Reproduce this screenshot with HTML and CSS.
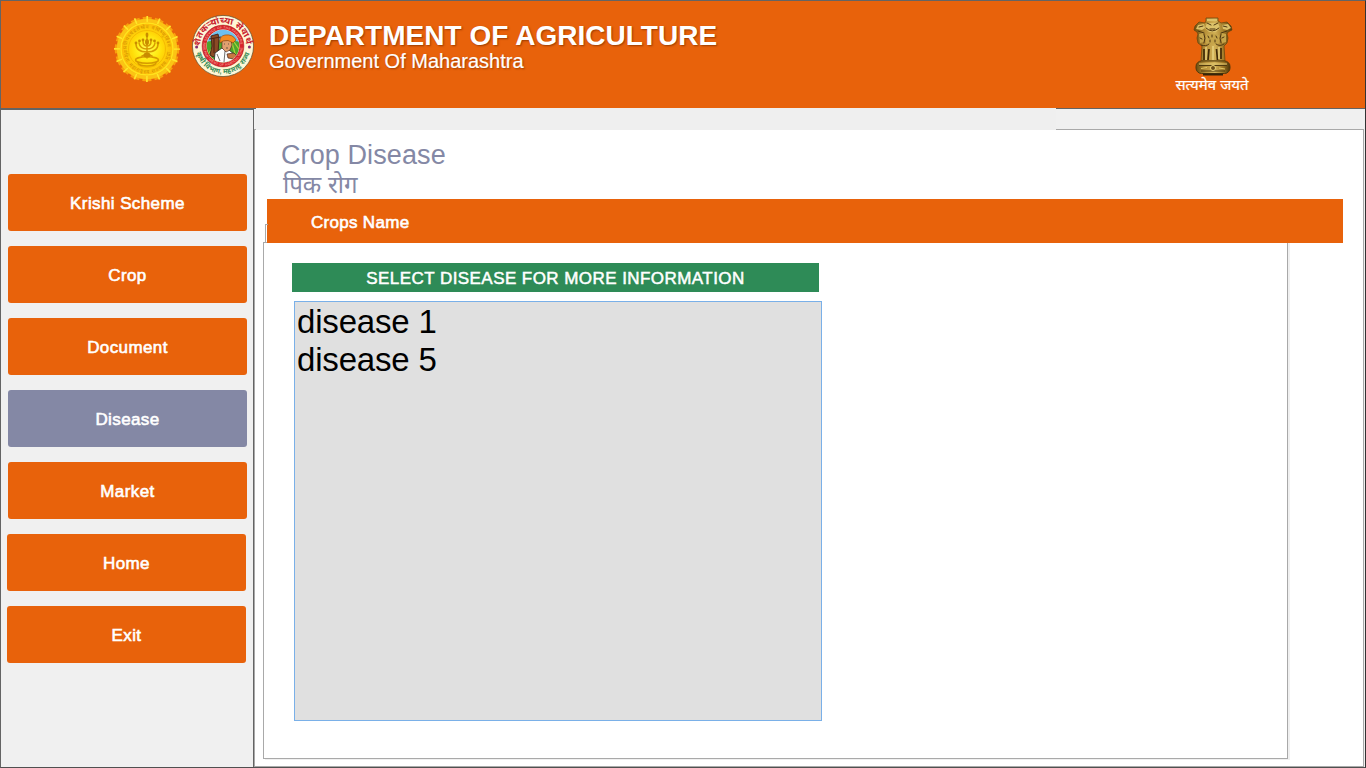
FILE: index.html
```html
<!DOCTYPE html>
<html lang="en">
<head>
<meta charset="utf-8">
<title>Department of Agriculture</title>
<link rel="stylesheet" href="styles.css">
</head>
<body>
<div class="window">
  <header class="header">
    <svg class="sun-logo" width="68" height="68" viewBox="-34 -34 68 68">
      <defs>
        <radialGradient id="sun"><stop offset="0" stop-color="#fff65a"/><stop offset=".35" stop-color="#fff01c"/><stop offset=".6" stop-color="#ffdb08"/><stop offset="1" stop-color="#fcb90a"/></radialGradient>
        <path id="sunTop" d="M-20.5 0A20.5 20.5 0 0 1 20.5 0"/>
        <path id="sunBottom" d="M-23.5 1A23.5 23.5 0 0 0 23.5 1"/>
      </defs>
      <circle r="29.500" fill="#f9a00d"/>
      <circle r="29.500" fill="none" stroke="#f9a00d" stroke-width="5.500" stroke-dasharray="8.6 2.985" stroke-dashoffset="4.3"/>
      <circle r="28.500" fill="none" stroke="#fbc414" stroke-width="3.500"/>
      <circle r="30" fill="none" stroke="#ffe72a" stroke-width="6" stroke-dasharray="1.6 10.181" stroke-dashoffset=".8"/>
      <circle r="26" fill="url(#sun)" stroke="#ffe21c" stroke-width="1.6"/>
      <circle r="18.5" fill="none" stroke="#f3b300" stroke-width=".8"/>
      <text class="seal-text" fill="#d08c00" font-size="5"><textPath href="#sunTop" textLength="62">प्रतिपच्चंद्रलेखेव वर्धिष्णुर्विश्व</textPath></text>
      <text class="seal-text" fill="#d08c00" font-size="5"><textPath href="#sunBottom" textLength="71">वंदिता महाराष्ट्रस्य राज्यस्य मुद्रा</textPath></text>
      <g fill="none" stroke="#d79a00" stroke-width="1.5" stroke-linecap="round">
        <path d="M0-14V9M-11-5Q-11 3 0 3T11-5M-8-6Q-7 0 0 0T8-6M-4-8Q-4-3 0-3T4-8"/>
        <path d="M-5 7Q0 4 5 7"/>
        <ellipse cy="11" rx="11.5" ry="3.2"/><path d="M-9 14Q-8 17 0 17T9 14"/>
      </g>
      <g fill="#c98c00"><ellipse cy="-14" rx="1.4" ry="2.4"/><circle cx="-4" cy="-9" r="1.4"/><circle cx="4" cy="-9" r="1.4"/><circle cx="-7.5" cy="-8" r="1.4"/><circle cx="7.5" cy="-8" r="1.4"/><circle cx="-11" cy="-6" r="1.4"/><circle cx="11" cy="-6" r="1.4"/><ellipse cy="-7" rx="2" ry="3"/><ellipse cy="6" rx="3.5" ry="2.6"/></g>
    </svg>
    <svg class="farmer-logo" width="64" height="64" viewBox="-32 -32 64 64">
      <defs>
        <clipPath id="scene"><circle r="16.2"/></clipPath>
        <path id="sealTop" d="M-22.7 4A23 23 0 1 1 22.7 4"/>
        <path id="sealBottom" d="M-27 5A27.4 27.4 0 0 0 27 5"/>
        <path id="ringTop" d="M-17.5 0A17.5 17.5 0 0 1 17.5 0"/>
        <path id="ringBottom" d="M-19.8 0A19.8 19.8 0 0 0 19.8 0"/>
      </defs>
      <circle r="30.6" fill="#fff6d5" stroke="#564c2c" stroke-width=".7"/>
      <circle r="18.7" fill="none" stroke="#d7242c" stroke-width="4.4"/>
      <circle r="20.9" fill="none" stroke="#a61b21" stroke-width=".5"/>
      <g clip-path="url(#scene)">
        <path fill="#6fc0ee" d="M-18-18h36v16h-36z"/><path fill="#4ea52b" d="M-18-4Q0-8 18-4V18H-18z"/>
        <path d="M-16 10L-9-1M11-4l7 10M9-3l4 14" stroke="#a9d13b" stroke-width="1.3"/>
        <path fill="#8a4a25" stroke="#45201a" stroke-width=".9" d="M-12-10l7-2 1 4-1 16-5 3-3-2 2-9z"/>
        <path fill="none" stroke="#512515" stroke-width="1.2" d="M-14-7l12-2M-9-8l0 15"/>
        <path fill="#fff" stroke="#282828" stroke-width=".8" d="M-9 18l1-11 7-5 4 2 3 0 6 5 2 10z"/>
        <path fill="#e0a070" stroke="#47241a" stroke-width=".6" d="M-1-6l9 0 1 5-2 5-4 2-4-4z"/>
        <path fill="#c67842" stroke="#47241a" stroke-width=".7" d="M4 8l7-1 3 3-3 3-6-1z"/>
        <path fill="#f68b20" stroke="#88400e" stroke-width=".6" d="M-3-3Q-4-10 2-11Q10-12 13-6L10-3Q5-7 0-5z"/>
        <path fill="none" stroke="#333" stroke-width=".7" d="M2 5L1 16M-6 8l3 7M1-2h1M5-2h1M3 2h2"/>
      </g>
      <text class="seal-text" fill="#c8202d" font-size="8.8" font-weight="bold"><textPath href="#sealTop" startOffset="4" textLength="70" lengthAdjust="spacingAndGlyphs">शेतकऱ्यांच्या सेवार्थ</textPath></text>
      <text class="seal-text" fill="#338b55" font-size="7" font-weight="bold"><textPath href="#sealBottom" startOffset="2" textLength="72" lengthAdjust="spacingAndGlyphs">कृषी विभाग, महाराष्ट्र राज्य</textPath></text>
      <text class="seal-text" fill="#ffc4b4" font-size="3.2"><textPath href="#ringTop" textLength="53">IN SERVICE OF THE FARMERS</textPath></text>
      <text class="seal-text" fill="#ffc4b4" font-size="3.2"><textPath href="#ringBottom" textLength="60">DEPARTMENT OF AGRICULTURE</textPath></text>
      <g fill="#862b70"><circle cx="-26.4" cy="1" r="1.5"/><circle cx="26.4" cy="1" r="1.5"/></g>
    </svg>
    <div class="titles">
      <h1 class="title">DEPARTMENT OF AGRICULTURE</h1>
      <p class="subtitle">Government Of Maharashtra</p>
    </div>
    <div class="emblem">
      <svg class="lions" width="42" height="60" viewBox="0 0 42 60">
        <defs><linearGradient id="gold"><stop offset="0" stop-color="#6b4d10"/><stop offset=".3" stop-color="#b8923a"/><stop offset=".55" stop-color="#d2b157"/><stop offset=".8" stop-color="#9c7524"/><stop offset="1" stop-color="#4d3509"/></linearGradient></defs>
        <path fill="url(#gold)" stroke="#60450f" stroke-width=".7" d="M14 4V1h12v3l3 2 6-1 4 4 1 4-4 2-1 2 1 4-1 5-3 3 1 15H9l1-15-4-3-1-5 1-4-1-2-3-2 1-4 4-4 6 1z"/>
        <path fill="#dcc26a" d="M15 2h10v2h-10zM15 6l11 0 2 5-4 4-7 0-4-4zM6 8l6-1 1 4-3 2-6-1zM30 8l6-1 3 4-4 2-4-1z"/>
        <path fill="#c6a54a" d="M7 17l5-1 0 9-4 1zM14 18q7-3 13 0l0 8q-6 3-13 0zM29 16l5 1 0 8-4 1z"/>
        <g fill="none" stroke="#4c3510" stroke-width="1" stroke-linecap="round"><path d="M15 6l4 2M26 6l-4 2M14 11Q20 17 27 11M18 12h5M11 9l-4 1M31 9l4 1M6 14l6 2M35 14l-6 2M12 17q2 4 0 9M29 17q-2 4 0 9M16 19l1 2M20 18v2M24 19l1 2M18 23v2M23 23v2M8 21l2 1M32 20l-2 1M9 28q5 2 8-1M24 27q4 3 8 0"/></g>
        <path d="M12 32v11M17 32l-1 11M24.500 32l1 11M29 31v11" stroke="#402b09" stroke-width="1.7"/>
        <path d="M14 30v13M21 29v14M27 30v12" stroke="#efdc8a" stroke-width="1.2"/>
        <rect x="4" y="44" width="34" height="12.500" rx="5.500" fill="url(#gold)" stroke="#533a0d"/>
        <path d="M7 47h28" stroke="#e6ce76"/><path d="M7 48.500h28M9 54h24" stroke="#503a10"/><circle cx="21" cy="51" r="2.500" fill="#6d501b" stroke="#ebd174"/><path d="M9 51.500l6-1M27 51l6 1" stroke="#e2c565"/>
        <path d="M11 57.500h20" stroke="#35250a" stroke-width="2"/>
      </svg>
      <span class="motto">सत्यमेव जयते</span>
    </div>
  </header>
  <div class="body">
    <nav class="sidebar">
      <button class="nav-button">Krishi Scheme</button>
      <button class="nav-button">Crop</button>
      <button class="nav-button">Document</button>
      <button class="nav-button active">Disease</button>
      <button class="nav-button">Market</button>
      <button class="nav-button shifted">Home</button>
      <button class="nav-button shifted">Exit</button>
    </nav>
    <div class="content">
      <div class="strip"><div class="strip-cover"></div></div>
      <main class="panel">
        <h2 class="page-title">Crop Disease</h2>
        <p class="page-subtitle">पिक रोग</p>
        <div class="crop-bar">Crops Name</div>
        <section class="tab-page">
          <div class="list-heading">SELECT DISEASE FOR MORE INFORMATION</div>
          <ul class="disease-list"><li>disease 1</li><li>disease 5</li></ul>
        </section>
      </main>
    </div>
  </div>
</div>
</body>
</html>
```
FILE: styles.css
```css
* { box-sizing: border-box; }
body, h1, h2, p, ul { margin: 0; padding: 0; }
body {
  width: 1366px;
  height: 768px;
  overflow: hidden;
  font-family: "Liberation Sans", "Noto Sans", "Noto Sans Devanagari", sans-serif;
}
.window {
  display: flex;
  flex-direction: column;
  width: 1366px;
  height: 768px;
  border: 1px solid #646464;
  border-right-color: #333;
  border-bottom-color: #505050;
  background: #f0f0f0;
}
.header {
  display: flex;
  align-items: flex-start;
  height: 108px;
  flex: none;
  padding: 14px 115px 0 112px;
  border-bottom: 1px solid #646464;
  background: #e8620b;
  color: #fff;
}
.farmer-logo { margin: -1px 0 0 10px; overflow: visible; }
.seal-text { font-family: "Liberation Sans", "Noto Sans", "Noto Sans Devanagari", sans-serif; }
.titles { margin: 5px auto 0 14px; text-shadow: 1px 1px 2px #9b3c00; }
.title { font-size: 28px; line-height: 32px; font-weight: 700; white-space: nowrap; letter-spacing: .03px; }
.subtitle { font-size: 20px; line-height: 22px; margin-top: -2px; -webkit-text-stroke: .2px #fff; }
.emblem { display: flex; flex-direction: column; align-items: center; width: 76px; }
.lions { margin: 2px 0 0 2px; }
.motto { font-size: 15px; line-height: 18px; margin-top: -1px; white-space: nowrap; -webkit-text-stroke: .2px #fff; }
.body { display: flex; flex: 1; min-height: 0; }
.sidebar {
  display: flex;
  flex-direction: column;
  gap: 15px;
  width: 253px;
  padding: 64px 0 0 7px;
  border-top: 1px solid #646464;
  border-right: 1px solid #646464;
}
.nav-button {
  width: 239px;
  height: 57px;
  flex: none;
  padding: 2px 0 0;
  border: 0;
  border-radius: 3px;
  background: #e8620b;
  color: #fff;
  font: 17px "Liberation Sans", sans-serif;
  letter-spacing: .4px;
  -webkit-text-stroke: .6px #fff;
}
.active { background: #8488a5; }
.shifted { margin-left: -1px; }
.content { display: flex; flex-direction: column; width: 1110px; }
.strip { height: 20px; flex: none; }
.strip-cover { position: relative; top: -1px; left: 2px; width: 800px; height: 22px; background: #efefef; }
.panel { flex: 1; border: 1px solid #a9a9a9; background: #fff; }
.page-title {
  margin: 10px 0 0 26px;
  font-size: 27px;
  line-height: 31px;
  font-weight: 400;
  letter-spacing: .1px;
  color: #8488a5;
}
.page-subtitle { height: 28px; margin-left: 28px; font-size: 24px; line-height: 28px; color: #8488a5; }
.crop-bar {
  position: relative;
  width: 1076px;
  height: 44px;
  margin-left: 12px;
  padding-left: 44px;
  background: #e8620b;
  color: #fff;
  font-size: 17px;
  line-height: 47px;
  letter-spacing: .3px;
  -webkit-text-stroke: .6px #fff;
}
.crop-bar::before { content: ""; position: absolute; left: -2px; top: 25px; width: 2px; height: 18px; border-left: 1px solid #a9a9a9; border-top: 1px solid #a9a9a9; }
.tab-page {
  width: 1025px;
  height: 517px;
  margin: -1px 0 0 8px;
  padding: 20px 0 0 28px;
  border: 1px solid #a9a9a9;
  box-shadow: 2px 1px 0 #f0f0f0;
}
.list-heading {
  width: 527px;
  height: 29px;
  background: #2e8b57;
  color: #fff;
  font-size: 17px;
  line-height: 31px;
  letter-spacing: .44px;
  text-align: center;
  -webkit-text-stroke: .5px #fff;
}
.disease-list {
  width: 528px;
  height: 420px;
  margin: 9px 0 0 2px;
  padding: 1px 2px;
  border: 1px solid #7ab0e8;
  background: #e0e0e0;
  list-style: none;
  color: #000;
  font-size: 33px;
  line-height: 38px;
  letter-spacing: -.18px;
}
```
